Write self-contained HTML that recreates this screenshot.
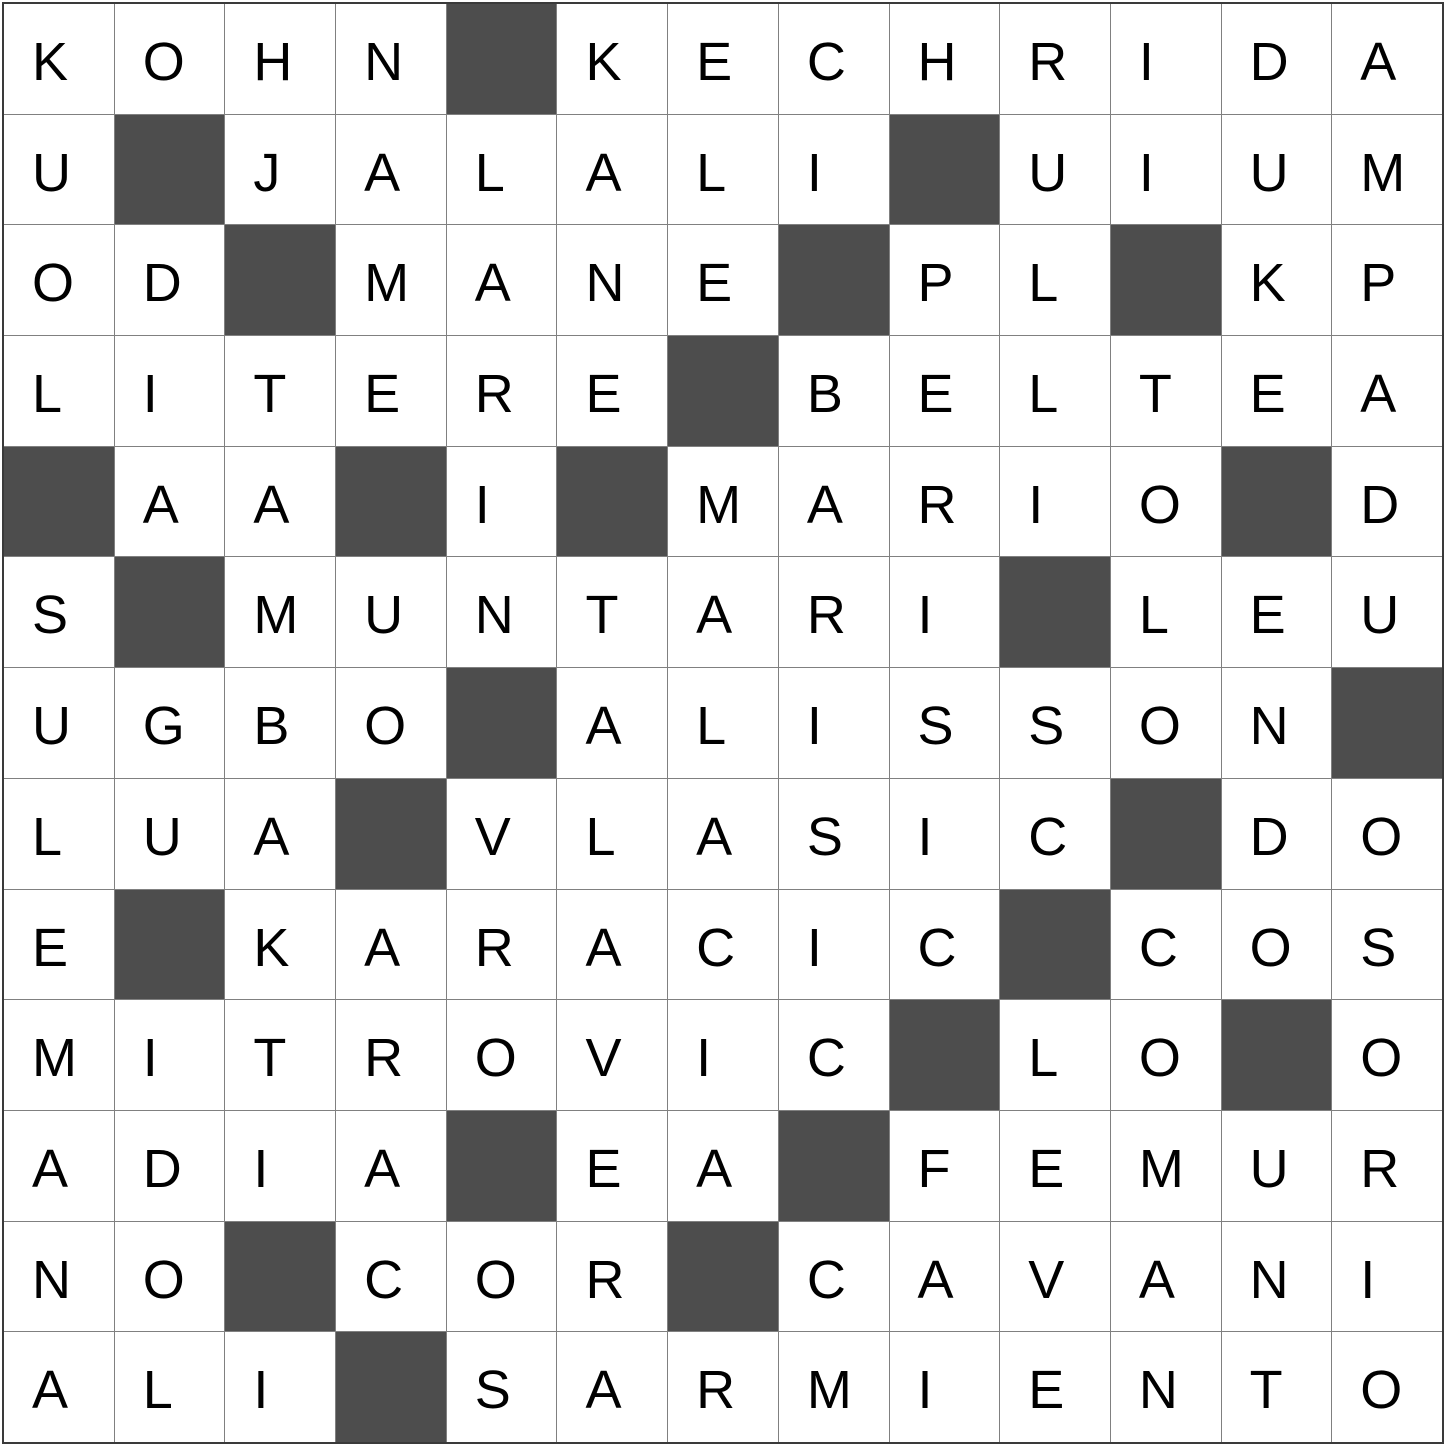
<!DOCTYPE html>
<html><head><meta charset="utf-8"><style>
html,body{margin:0;padding:0;background:#fff;width:1446px;height:1444px;overflow:hidden}
.g{position:absolute;left:2px;top:2px;width:1442px;height:1442px;box-sizing:border-box;border:2px solid #3a3a3a;background:#808080;display:grid;grid-template-columns:repeat(13,1fr);grid-template-rows:repeat(13,1fr);gap:1px}
.g div{background:#fff;font:54px "Liberation Sans",sans-serif;color:#000;padding-left:28px;line-height:116px;overflow:hidden}
.g div.b{background:#4d4d4d}
</style></head><body><div class="g">
<div>K</div><div>O</div><div>H</div><div>N</div><div class="b"></div><div>K</div><div>E</div><div>C</div><div>H</div><div>R</div><div>I</div><div>D</div><div>A</div>
<div>U</div><div class="b"></div><div>J</div><div>A</div><div>L</div><div>A</div><div>L</div><div>I</div><div class="b"></div><div>U</div><div>I</div><div>U</div><div>M</div>
<div>O</div><div>D</div><div class="b"></div><div>M</div><div>A</div><div>N</div><div>E</div><div class="b"></div><div>P</div><div>L</div><div class="b"></div><div>K</div><div>P</div>
<div>L</div><div>I</div><div>T</div><div>E</div><div>R</div><div>E</div><div class="b"></div><div>B</div><div>E</div><div>L</div><div>T</div><div>E</div><div>A</div>
<div class="b"></div><div>A</div><div>A</div><div class="b"></div><div>I</div><div class="b"></div><div>M</div><div>A</div><div>R</div><div>I</div><div>O</div><div class="b"></div><div>D</div>
<div>S</div><div class="b"></div><div>M</div><div>U</div><div>N</div><div>T</div><div>A</div><div>R</div><div>I</div><div class="b"></div><div>L</div><div>E</div><div>U</div>
<div>U</div><div>G</div><div>B</div><div>O</div><div class="b"></div><div>A</div><div>L</div><div>I</div><div>S</div><div>S</div><div>O</div><div>N</div><div class="b"></div>
<div>L</div><div>U</div><div>A</div><div class="b"></div><div>V</div><div>L</div><div>A</div><div>S</div><div>I</div><div>C</div><div class="b"></div><div>D</div><div>O</div>
<div>E</div><div class="b"></div><div>K</div><div>A</div><div>R</div><div>A</div><div>C</div><div>I</div><div>C</div><div class="b"></div><div>C</div><div>O</div><div>S</div>
<div>M</div><div>I</div><div>T</div><div>R</div><div>O</div><div>V</div><div>I</div><div>C</div><div class="b"></div><div>L</div><div>O</div><div class="b"></div><div>O</div>
<div>A</div><div>D</div><div>I</div><div>A</div><div class="b"></div><div>E</div><div>A</div><div class="b"></div><div>F</div><div>E</div><div>M</div><div>U</div><div>R</div>
<div>N</div><div>O</div><div class="b"></div><div>C</div><div>O</div><div>R</div><div class="b"></div><div>C</div><div>A</div><div>V</div><div>A</div><div>N</div><div>I</div>
<div>A</div><div>L</div><div>I</div><div class="b"></div><div>S</div><div>A</div><div>R</div><div>M</div><div>I</div><div>E</div><div>N</div><div>T</div><div>O</div>
</div></body></html>
